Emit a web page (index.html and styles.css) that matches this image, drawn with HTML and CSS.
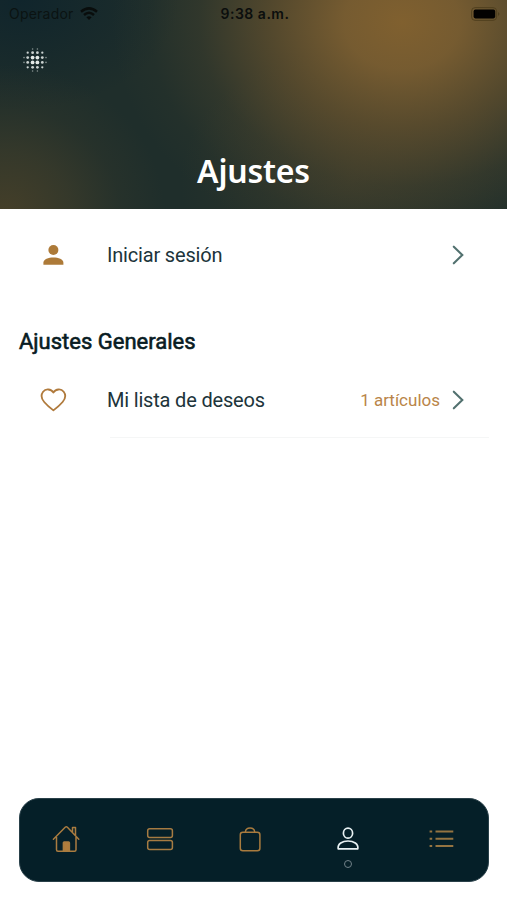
FILE: index.html
```html
<!DOCTYPE html>
<html lang="es">
<head>
<meta charset="utf-8">
<title>Ajustes</title>
<link rel="stylesheet" href="styles.css">
</head>
<body>
<div class="app">
  <header class="hero">
    <div class="status">
      <div class="carrier"><span>Operador</span>
        <svg width="18" height="14" viewBox="0 0 18 14" fill="none" stroke="#090d0c" stroke-width="2.5"><path d="M1 4.8Q9-2 17 4.8M4 8Q9 3.6 14 8"/><path d="M6.4 10.3Q9 8.2 11.6 10.3L9 13Z" fill="#090d0c" stroke="none"/></svg>
      </div>
      <div class="time">9:38 a.m.</div>
      <svg class="battery" width="30" height="14" viewBox="0 0 30 14"><rect x=".6" y=".6" width="25" height="12.8" rx="3.5" fill="none" stroke="#51401f" stroke-width="1"/><rect x="2.6" y="2.6" width="21.6" height="8.8" rx="1.8" fill="#030201"/><path d="M27.3 5q2 2 0 4z" fill="#443719"/></svg>
    </div>
    <svg class="dots" width="24" height="24" viewBox="0 0 24 24" fill="#e3e9e7">
      <g><circle cx="9.6" cy="9.6" r="1.9"/><circle cx="14.4" cy="9.6" r="1.9"/><circle cx="9.6" cy="14.4" r="1.9"/><circle cx="14.4" cy="14.4" r="1.9"/></g>
      <g opacity=".88"><circle cx="4.7" cy="4.7" r="1.15"/><circle cx="9.6" cy="4.7" r="1.4"/><circle cx="14.4" cy="4.7" r="1.4"/><circle cx="19.3" cy="4.7" r="1.15"/><circle cx="4.7" cy="9.6" r="1.4"/><circle cx="19.3" cy="9.6" r="1.4"/><circle cx="4.7" cy="14.4" r="1.4"/><circle cx="19.3" cy="14.4" r="1.4"/><circle cx="4.7" cy="19.3" r="1.15"/><circle cx="9.6" cy="19.3" r="1.4"/><circle cx="14.4" cy="19.3" r="1.4"/><circle cx="19.3" cy="19.3" r="1.15"/></g>
      <g opacity=".55"><circle cx="9.6" cy="1" r=".8"/><circle cx="14.4" cy="1" r=".8"/><circle cx="9.6" cy="23" r=".8"/><circle cx="14.4" cy="23" r=".8"/><circle cx="1" cy="9.6" r=".8"/><circle cx="1" cy="14.4" r=".8"/><circle cx="23" cy="9.6" r=".8"/><circle cx="23" cy="14.4" r=".8"/></g>
    </svg>
    <h1>Ajustes</h1>
  </header>
  <main>
    <div class="row login">
      <svg class="lead" width="28" height="28" viewBox="0 0 28 28" fill="#ad7a38"><circle cx="14.4" cy="9" r="5"/><path d="M4.4 23.7v-1.900c0-3.500 5-5.300 10-5.300s10 1.800 10 5.300v1.900z"/></svg>
      <span class="label">Iniciar sesión</span>
      <svg class="chev" width="12" height="20" viewBox="0 0 12 20"><path d="M1.8 1.7 10.300 10l-8.500 8.300"/></svg>
    </div>
    <h2>Ajustes Generales</h2>
    <div class="row wish">
      <svg class="lead" width="28" height="28" viewBox="0 0 28 28" fill="none" stroke="#b07a3c" stroke-width="1.8" stroke-linejoin="round"><path d="M14.400 6.600C12 2.800 6.700 2.400 4.100 5.700c-2.500 3.300-1.400 7.300 1.100 10.300 2.600 3.100 5.800 5.800 9.200 8.400 3.400-2.600 6.600-5.300 9.200-8.400 2.500-3 3.600-7 1.100-10.300C22.100 2.400 16.800 2.800 14.400 6.600Z"/></svg>
      <span class="label">Mi lista de deseos</span>
      <span class="count">1 artículos</span>
      <svg class="chev" width="12" height="20" viewBox="0 0 12 20"><path d="M1.8 1.7 10.300 10l-8.500 8.300"/></svg>
    </div>
    <div class="divider"></div>
  </main>
  <nav class="tabs">
    <div class="tab home"><svg width="28" height="28" viewBox="0 0 28 28" fill="none" stroke="#aa7c40" stroke-width="1.5" stroke-linejoin="round" stroke-linecap="round"><path d="M1.4 14.2 13.2 2.3q1.1-1 2.2 0L26.8 14.2M20.5 7.2V2.6H23.5V10.5M4.5 12v12.7q0 1.5 1.5 1.5H22.5q1.5 0 1.5-1.5V12"/><path d="M11.4 26v-8.2q0-.8.8-.8h4.400q.8 0 .8.800V26z" fill="#b07d3d"/></svg></div>
    <div class="tab"><svg width="28" height="28" viewBox="0 0 28 28" fill="none" stroke="#a67b42" stroke-width="1.5"><rect x="1.7" y="3.7" width="24.7" height="8.8" rx="2"/><rect x="1.7" y="15.5" width="24.7" height="9" rx="2"/></svg></div>
    <div class="tab bag"><svg width="28" height="28" viewBox="0 0 28 28" fill="none" stroke="#a97b3e" stroke-width="1.5"><rect x="4.3" y="7.2" width="19.6" height="18.6" rx="2.5"/><path d="M9.4 7c.5-5.200 8.800-5.200 9.300 0"/></svg></div>
    <div class="tab active"><svg width="28" height="28" viewBox="0 0 28 28" fill="none" stroke="#e9f2f4" stroke-width="1.7"><ellipse cx="14" cy="8.2" rx="4.6" ry="5"/><path d="M4.2 23.9c-.9-5.200 4.400-7.900 9.800-7.900s10.700 2.700 9.800 7.900z" stroke-linejoin="round"/></svg><span class="mark"></span></div>
    <div class="tab menu"><svg width="28" height="28" viewBox="0 0 28 28" stroke="#957441" stroke-width="2"><path d="M1.6 6.6h2.600M1.600 13.800h2.600M1.600 21h2.600M7.500 6.600h17.800M7.500 13.800h17.800M7.500 21h17.800"/></svg></div>
  </nav>
</div>
</body>
</html>
```

FILE: styles.css
```css
* { box-sizing: border-box; }
body { margin: 0; background: #fff; font-family: Roboto, "Liberation Sans", sans-serif; color: #0c2027; }
svg { display: block; flex: none; }
.app { display: flex; flex-direction: column; width: 507px; height: 900px; padding-bottom: 18px; }
.hero {
  height: 208.6px;
  display: flex;
  flex-direction: column;
  background:
    radial-gradient(ellipse 290px 235px at 402px 22px, #80602f 0%, rgba(125,95,49,.92) 20%, rgba(115,88,46,.62) 45%, rgba(98,80,45,.26) 70%, rgba(85,75,43,.08) 87%, rgba(75,70,43,0) 100%),
    radial-gradient(ellipse 160px 150px at 5px 215px, #453f29 0%, rgba(67,63,42,.6) 42%, rgba(67,63,42,.2) 72%, rgba(67,63,42,0) 100%),
    radial-gradient(ellipse 160px 110px at 20px 0, #10252c 0%, rgba(16,37,44,0) 100%),
    radial-gradient(ellipse 170px 130px at 350px 180px, rgba(59,59,43,.7) 0%, rgba(59,59,43,0) 100%),
    #1f2e2b;
}
.status { display: grid; grid-template-columns: 1fr auto 1fr; align-items: center; height: 27px; padding: 0 6px 0 9px; font-family: Inter, sans-serif; color: #0b0e0d; }
.carrier { display: flex; align-items: center; gap: 6px; font-size: 14px; letter-spacing: .22px; color: #0b1312; }
.time { font-size: 14px; font-weight: 600; letter-spacing: .5px; }
.battery { justify-self: end; }
.dots { margin: 21px 0 0 23px; }
h1 { margin: 74px 0 0; font: 600 32px/50px "Noto Sans", sans-serif; letter-spacing: -.2px; color: #fff; text-align: center; }
main { flex: 1; }
.row { display: flex; align-items: center; height: 76px; padding: 0 43px 0 39px; }
.login { height: 93px; }
.label { flex: 1; margin-left: 40px; font-size: 20px; letter-spacing: -.18px; color: #20343a; }
h2 { margin: 26px 0 0 19px; font-size: 22px; line-height: 28px; font-weight: 400; color: #091c23; -webkit-text-stroke: .6px #091c23; }
.wish { margin-top: 7px; height: 75px; }
.count { margin-right: 12px; font-size: 17px; color: #b98549; }
.chev { fill: none; stroke: #52716f; stroke-width: 2.1; stroke-linecap: round; }
.divider { height: 1px; margin: -1px 18px 0 110px; background: #f5f6f6; }
.tabs { display: flex; height: 84px; margin: 0 18px 0 19px; border-radius: 20px; background: #051f28; border: 1px solid #294049; }
.tab { flex: 1; display: flex; flex-direction: column; align-items: center; padding-top: 26px; }
.home svg { margin-right: 2px; }
.bag svg { margin-right: 8px; }
.menu svg { margin-left: 2px; }
.mark { width: 8px; height: 8px; margin-top: 7px; border: 1px solid #718188; border-radius: 50%; }
```
